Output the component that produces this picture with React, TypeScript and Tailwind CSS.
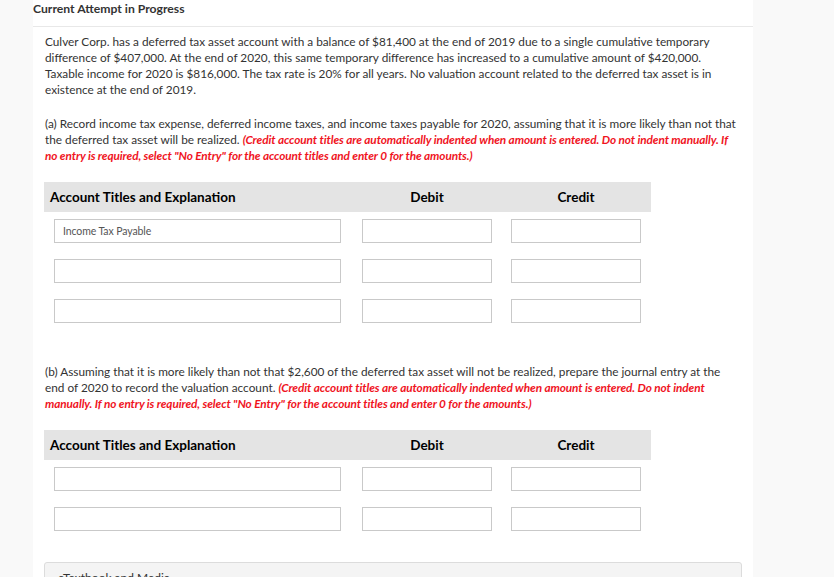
import React from 'react';

const font = { fontFamily: 'Lato, "Noto Sans", sans-serif' };

function EntryRow({ account = '' }: { account?: string }) {
    return (
        <div className="flex items-center pl-[10px]">
            <input
                readOnly
                value={account}
                className="w-[287px] h-[24px] border border-[#c9c9c9] bg-white px-[8px] text-[10.5px] text-[#555] tracking-[-0.1px] outline-none"
                style={font}
            />
            <input readOnly className="ml-[21px] w-[130px] h-[24px] border border-[#c9c9c9] bg-white outline-none" />
            <input readOnly className="ml-[19px] w-[130px] h-[24px] border border-[#c9c9c9] bg-white outline-none" />
        </div>
    );
}

function JournalTable({ rows }: { rows: string[] }) {
    return (
        <div className="w-[607px]">
            {/* Header band */}
            <div className="flex items-center h-[30px] bg-[#e4e4e4] text-[13.5px] font-bold text-black">
                <div className="w-[318px] pl-[6px]">Account Titles and Explanation</div>
                <div className="w-[130px] text-center">Debit</div>
                <div className="ml-[19px] w-[130px] text-center">Credit</div>
            </div>
            <div className="flex flex-col gap-[16px] mt-[7px]">
                {rows.map((r, i) => (
                    <EntryRow key={i} account={r} />
                ))}
            </div>
        </div>
    );
}

export default function App() {
    return (
        <div className="flex h-screen overflow-hidden bg-[#f9f9f9]" style={font}>
            <div className="w-[33px] shrink-0" />
            <main className="w-[720px] shrink-0 bg-white text-[#333]">
                <div className="h-[27px] border-b border-[#e8e8e8] flex items-start">
                    <h2 className="text-[12.2px] font-bold leading-[18px] text-[#333]">Current Attempt in Progress</h2>
                </div>

                <div className="pl-[11px] pr-[11px] text-[11.8px] leading-[16px]">
                    <p className="mt-[7px] pl-px">
                        Culver Corp. has a deferred tax asset account with a balance of $81,400 at the end of 2019 due to a single cumulative temporary difference of $407,000. At the end of 2020, this same temporary difference has increased to a cumulative amount of $420,000. Taxable income for 2020 is $816,000. The tax rate is 20% for all years. No valuation account related to the deferred tax asset is in existence at the end of 2019.
                    </p>

                    <p className="mt-[18px] pl-px">
                        (a) Record income tax expense, deferred income taxes, and income taxes payable for 2020, assuming that it is more likely than not that the deferred tax asset will be realized.{' '}
                        <em className="font-bold text-[#f0141e] tracking-[-0.1px]">
                            (Credit account titles are automatically indented when amount is entered. Do not indent manually. If no entry is required, select "No Entry" for the account titles and enter 0 for the amounts.)
                        </em>
                    </p>

                    <div className="mt-[18px]">
                        <JournalTable rows={['Income Tax Payable', '', '']} />
                    </div>

                    <p className="mt-[41px] pl-px">
                        (b) Assuming that it is more likely than not that $2,600 of the deferred tax asset will not be realized, prepare the journal entry at the end of 2020 to record the valuation account.{' '}
                        <em className="font-bold text-[#f0141e] tracking-[-0.1px]">
                            (Credit account titles are automatically indented when amount is entered. Do not indent manually. If no entry is required, select "No Entry" for the account titles and enter 0 for the amounts.)
                        </em>
                    </p>

                    <div className="mt-[18px]">
                        <JournalTable rows={['', '']} />
                    </div>

                    <div className="mt-[31px] h-[40px] border border-[#dcdcdc] rounded-[3px] bg-[#f4f4f4] px-[13px] pt-[7px] text-[12px] text-[#333]">
                        eTextbook and Media
                    </div>
                </div>
            </main>
            <div className="flex-1" />
        </div>
    );
}
